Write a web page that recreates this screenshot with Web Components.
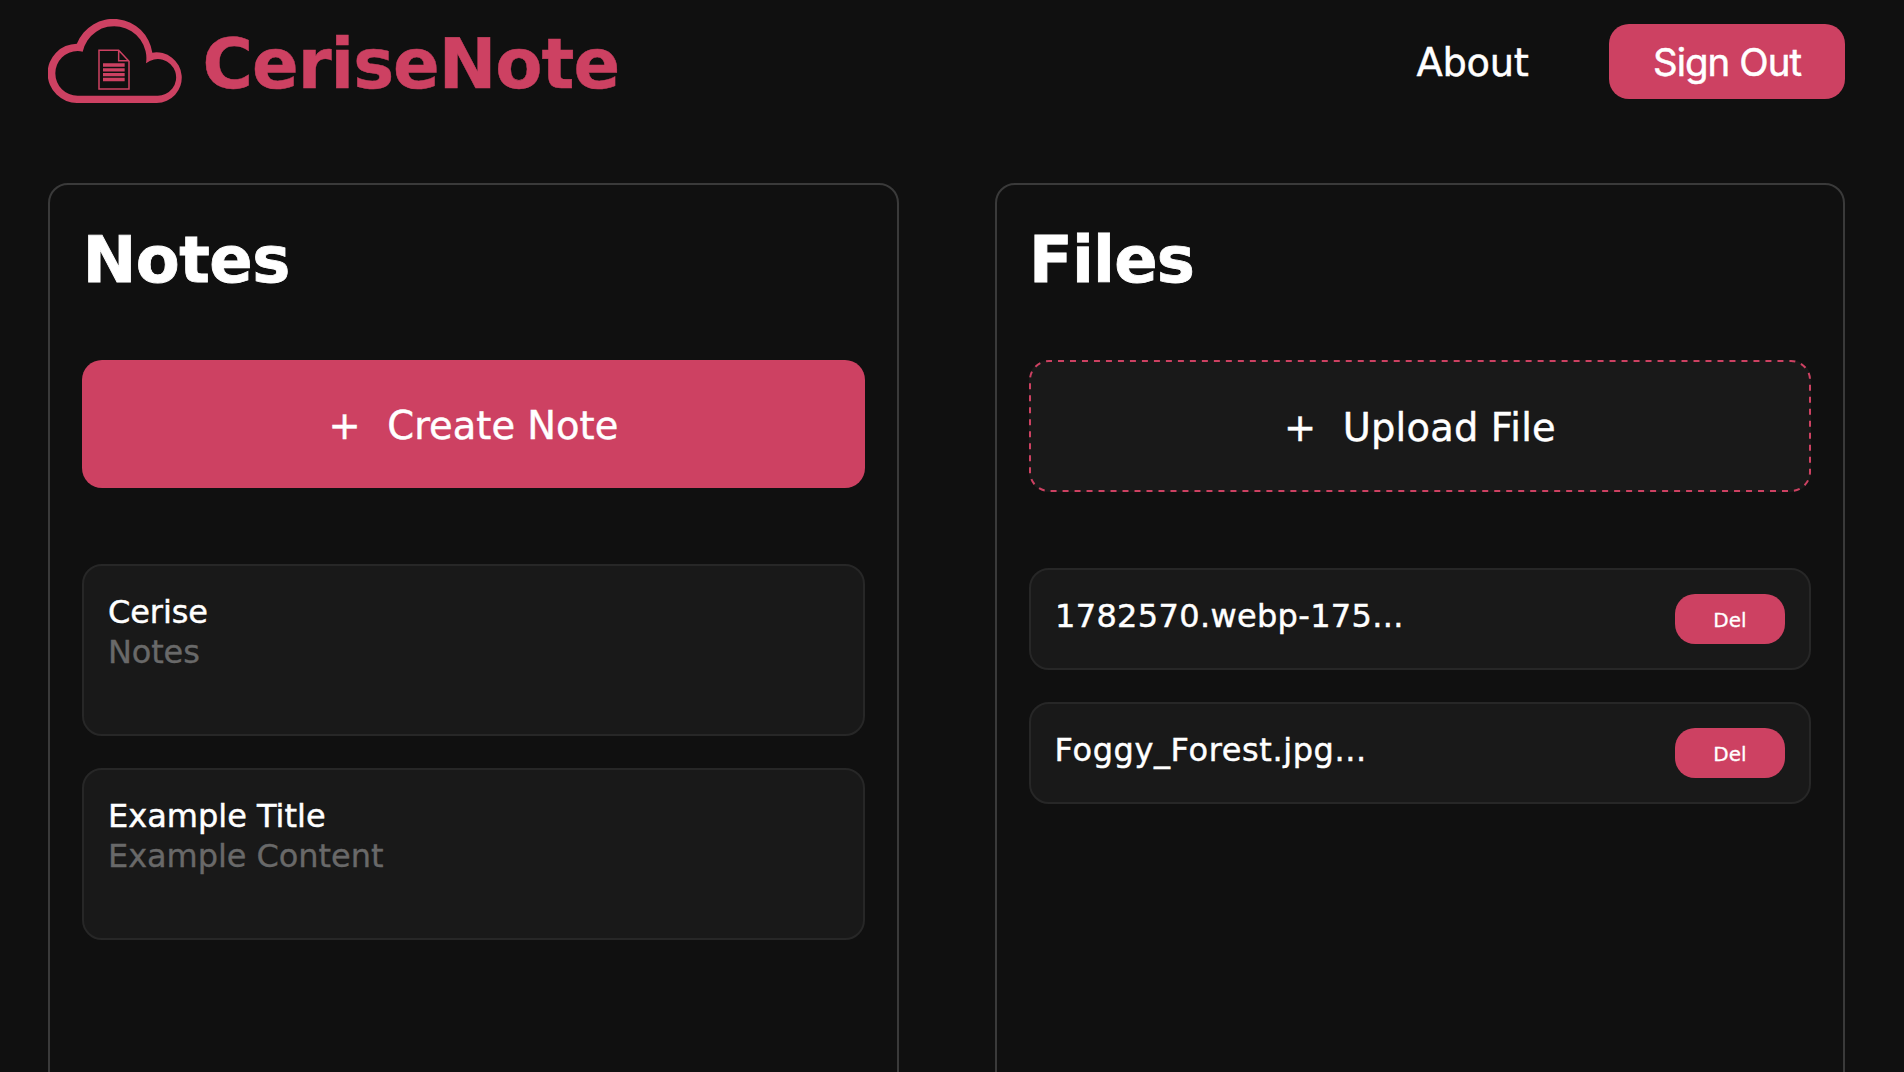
<!DOCTYPE html>
<html lang="en">
<head>
<meta charset="utf-8">
<title>CeriseNote</title>
<style>
  html, body { margin: 0; height: 100%; overflow: hidden; background: #101010; }
  body { font-family: "DejaVu Sans", Verdana, sans-serif; color: #fff; --cerise: #cd4162; -webkit-text-stroke: .45px; }
</style>
</head>
<body>
<cerise-app>
  <cerise-header slot="header"></cerise-header>
  <cerise-panel heading="Notes" style="--heading-spacing:-.5px;--heading-shift:.7px">
    <cerise-action label="Create Note" style="--spacing:.04px"></cerise-action>
    <cerise-note slot="items" style="--title-spacing:-.1px;--body-spacing:-.15px"><span slot="title">Cerise</span><span slot="body">Notes</span></cerise-note>
    <cerise-note slot="items" style="--title-spacing:0px;--body-spacing:-.06px"><span slot="title">Example Title</span><span slot="body">Example Content</span></cerise-note>
  </cerise-panel>
  <cerise-panel heading="Files" style="--heading-spacing:-.82px">
    <cerise-action outlined label="Upload File" style="--spacing:.2px"></cerise-action>
    <cerise-file slot="items" style="--spacing:.34px">1782570.webp-175...</cerise-file>
    <cerise-file slot="items" style="--spacing:.6px;--shift:-.4px">Foggy_Forest.jpg...</cerise-file>
  </cerise-panel>
</cerise-app>
<script>
const define = (name, html, setup) => customElements.define(name, class extends HTMLElement {
  constructor() {
    super();
    const t = document.createElement('template');
    t.innerHTML = html;
    this.attachShadow({ mode: 'open' }).append(t.content.cloneNode(true));
  }
  connectedCallback() { if (setup) setup(this, this.shadowRoot); }
});

define('cerise-app', `
<style>
  :host { display: flex; flex-direction: column; height: 1072px; box-sizing: border-box; padding: 0 59px 0 48px; overflow: hidden; }
  main { flex: none; height: 1000px; margin-top: 60px; display: grid; grid-template-columns: 851px 850px; column-gap: 96px; }
</style>
<slot name="header"></slot>
<main><slot></slot></main>`);

define('cerise-logo', `
<style>
  :host { display: flex; align-items: flex-start; height: 85px; }
  svg { display: block; flex: none; width: 134px; height: 84px; }
  strong { font-size: 68.8px; line-height: 80px; letter-spacing: -1px; color: var(--cerise); margin: 5px 0 0 20.5px; white-space: nowrap; }
</style>
<svg viewBox="54 57 402 252" aria-hidden="true">
  <path fill="var(--cerise)" fill-rule="evenodd" d="M143 309A89 89 0 0 1 140.500 131A118 118 0 0 1 367 158A76 76 0 1 1 380 309ZM143 287H380A55 55 0 1 0 348 190A96.580 96.580 0 0 0 158 155.500Q151 153 143 153A67 67 0 0 0 143 287Z"/>
  <path fill="none" stroke="var(--cerise)" stroke-width="4.500" d="M207 151H266L297 184V267H207ZM266 151V182H297"/>
  <path stroke="var(--cerise)" stroke-width="10" d="M219 195H284M219 209.500H284M219 224H284M219 238.500H284"/>
</svg>
<strong>CeriseNote</strong>`);

define('cerise-header', `
<style>
  :host { display: flex; align-items: center; justify-content: space-between; height: 123px; flex: none; }
  nav { display: flex; align-items: center; }
  a { font-size: 38.4px; line-height: 48px; letter-spacing: -.29px; margin-right: 80.500px; padding-top: 2px; }
  button { all: unset; box-sizing: border-box; width: 236px; height: 75px; border-radius: 20px; background: var(--cerise); text-align: center; font: 38.4px/76px Inter, sans-serif; letter-spacing: -.94px; -webkit-text-stroke: .5px; }
</style>
<cerise-logo></cerise-logo>
<nav><a>About</a><button>Sign Out</button></nav>`);

define('cerise-panel', `
<style>
  :host { display: block; box-sizing: border-box; min-width: 0; border: 2px solid #3a3a3a; border-radius: 20px; padding: 36px 32px; }
  h2 { margin: 0 0 61px var(--heading-shift, 0); font-size: 64px; line-height: 78px; letter-spacing: var(--heading-spacing); -webkit-text-stroke: .8px; }
  .items { display: flex; flex-direction: column; gap: 32px; margin-top: 76px; }
</style>
<h2></h2>
<slot></slot>
<div class="items"><slot name="items"></slot></div>`,
(host, root) => { root.querySelector('h2').textContent = host.getAttribute('heading'); });

define('cerise-action', `
<style>
  :host { display: flex; position: relative; align-items: center; justify-content: center; gap: 26.500px; box-sizing: border-box; height: 128px; padding-top: 3px; border-radius: 20px; background: var(--cerise); font-size: 38.4px; line-height: 46px; }
  :host([outlined]) { height: 132px; background: #191919; }
  .label { letter-spacing: var(--spacing); }
  svg { display: none; position: absolute; inset: 0; }
  :host([outlined]) svg { display: block; }
</style>
<svg width="782" height="132" aria-hidden="true"><rect x="1" y="1" width="780" height="130" rx="19" fill="none" stroke="var(--cerise)" stroke-width="2" pathLength="1788" stroke-dasharray="6 6" stroke-dashoffset="3"/></svg>
<span>+</span><span class="label"></span>`,
(host, root) => { root.querySelector('.label').textContent = host.getAttribute('label'); });

define('cerise-note', `
<style>
  :host { display: block; box-sizing: border-box; height: 172px; border: 2px solid #272727; border-radius: 20px; background: #191919; padding: 26px 24px; font-size: 32px; line-height: 40px; }
  div { letter-spacing: var(--title-spacing); }
  .body { color: #696969; letter-spacing: var(--body-spacing); -webkit-text-stroke: .35px; }
</style>
<div><slot name="title"></slot></div>
<div class="body"><slot name="body"></slot></div>`);

define('cerise-file', `
<style>
  :host { display: flex; justify-content: space-between; align-items: flex-start; box-sizing: border-box; height: 102px; border: 2px solid #272727; border-radius: 20px; background: #191919; padding: 24px; font-size: 32px; line-height: 40px; }
  span { margin: 2px 0 0 var(--shift, 0); letter-spacing: var(--spacing); }
  button { all: unset; box-sizing: border-box; width: 110px; height: 50px; border-radius: 20px; background: var(--cerise); text-align: center; font-size: 20px; line-height: 52px; -webkit-text-stroke: .3px; }
</style>
<span><slot></slot></span><button>Del</button>`);
</script>
</body>
</html>
